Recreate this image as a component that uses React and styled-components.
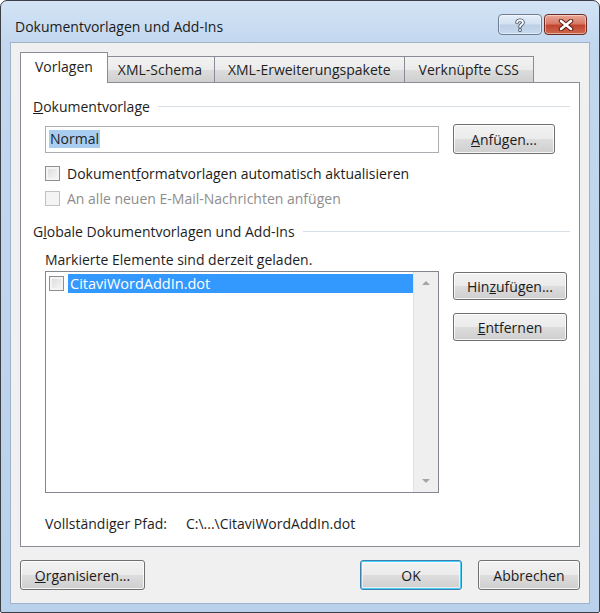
import React from "react";
import styled, { createGlobalStyle, css } from "styled-components";

const GlobalStyle = createGlobalStyle`
  html, body {
    margin: 0;
    padding: 0;
    background: #ffffff;
  }
  body {
    font-family: "Segoe UI", "Open Sans", "Noto Sans", sans-serif;
    font-size: 14px;
    color: #1e1e1e;
  }
`;

const Window = styled.div`
  width: 600px;
  height: 613px;
  box-sizing: border-box;
  border: 1px solid #3b3f45;
  border-radius: 7px 7px 2px 2px;
  background: linear-gradient(180deg, #d3e3f5 0px, #c3d8ef 40px, #b9d1ea 100%);
  padding: 0 9px 8px 9px;
  display: flex;
  flex-direction: column;
  overflow: hidden;
`;

const TitleBar = styled.div`
  height: 41px;
  display: flex;
  align-items: flex-start;
  justify-content: space-between;
`;

const Title = styled.div`
  padding: 16px 0 0 5px;
  font-size: 14px;
  color: #1b1b1b;
`;

const Caption = styled.div`
  display: flex;
  gap: 2px;
  padding-top: 13px;
  margin-right: 3px;
`;

const CaptionButton = styled.div`
  width: ${(p) => p.$w}px;
  height: 21px;
  box-sizing: border-box;
  border: 1px solid ${(p) => (p.$close ? "#6d2a22" : "#6f7e92")};
  border-radius: 4px;
  display: flex;
  align-items: center;
  justify-content: center;
  box-shadow: inset 0 0 0 1px rgba(255, 255, 255, 0.45);
  background: ${(p) =>
    p.$close
      ? "linear-gradient(180deg, #e9a797 0%, #d97a68 45%, #c2452f 55%, #cf6a4f 100%)"
      : "linear-gradient(180deg, #e6eef8 0%, #d3e1f1 45%, #bccfe5 55%, #c9daee 100%)"};
`;

const Client = styled.div`
  flex: 1;
  background: #f0f0f0;
  border: 1px solid #9eb3c9;
  padding: 9px 9px 0 9px;
  display: flex;
  flex-direction: column;
`;

const TabRow = styled.div`
  display: flex;
  align-items: flex-end;
  height: 30px;
  padding-left: 2px;
  position: relative;
  z-index: 1;
`;

const Tab = styled.div`
  height: 26px;
  box-sizing: border-box;
  padding: 0 ${(p) => p.$pad}px 1px;
  border: 1px solid #898c95;
  border-bottom: none;
  margin-left: -1px;
  display: flex;
  align-items: center;
  background: linear-gradient(180deg, #f3f3f3 0%, #ebebeb 50%, #dddddd 51%, #cfcfcf 100%);
  ${(p) =>
    p.$active &&
    css`
      margin: 0 -2px -1px -2px;
      padding: 0 ${p.$pad + 2}px 3px;
      background: #ffffff;
      position: relative;
      z-index: 2;
      height: 31px;
    `}
`;

const Panel = styled.div`
  background: #ffffff;
  border: 1px solid #898c95;
  height: 465px;
  box-sizing: border-box;
  padding: 13px 9px 0 12px;
  display: flex;
  flex-direction: column;
`;

const SectionHead = styled.div`
  display: flex;
  align-items: center;
  height: 20px;
  gap: 8px;
  margin-top: ${(p) => p.$top || 0}px;
  &::after {
    content: "";
    flex: 1;
    height: 1px;
    background: #d5dfe5;
    margin-top: 1px;
  }
`;

const Indent = styled.div`
  padding-left: 12px;
  margin-top: ${(p) => p.$top || 0}px;
`;

const InputRow = styled.div`
  display: flex;
  align-items: center;
  gap: 14px;
  height: 30px;
  margin-bottom: 7px;
`;

const TextBox = styled.div`
  width: 394px;
  height: 27px;
  box-sizing: border-box;
  border: 1px solid #abadb3;
  display: flex;
  align-items: center;
  padding-left: 3px;
`;

const Selected = styled.span`
  background: #a8cdf1;
  padding: 0 1px;
  line-height: 18px;
`;

const Button = styled.div`
  width: ${(p) => p.$w}px;
  height: ${(p) => p.$h || 29}px;
  box-sizing: border-box;
  border: 1px solid ${(p) => (p.$default ? "#3c7fb1" : "#707070")};
  border-radius: 3px;
  display: flex;
  align-items: center;
  justify-content: center;
  background: linear-gradient(180deg, #f2f2f2 0%, #ebebeb 49%, #dddddd 50%, #cfcfcf 100%);
  box-shadow: ${(p) =>
    p.$default
      ? "inset 0 0 0 1px #48d0f8, inset 0 0 0 2px rgba(255,255,255,0.6)"
      : "inset 0 0 0 1px rgba(255,255,255,0.8)"};
  color: #1b1b1b;
`;

const CheckRow = styled.div`
  display: flex;
  align-items: center;
  height: 25px;
  gap: 7px;
  color: ${(p) => (p.$disabled ? "#8d8d8d" : "#1b1b1b")};
`;

const Box = styled.span`
  width: 15px;
  height: 15px;
  box-sizing: border-box;
  border: 1px solid ${(p) => (p.$disabled ? "#c2c2c2" : "#8e8f8f")};
  background: ${(p) =>
    p.$disabled
      ? "#f4f4f4"
      : "linear-gradient(135deg, #d9d9d9 0%, #ececec 60%, #f8f8f8 100%)"};
  box-shadow: inset 0 0 0 2px #f4f4f4;
  flex-shrink: 0;
`;

const Line = styled.div`
  height: 20px;
  display: flex;
  align-items: center;
  margin-top: ${(p) => p.$top || 0}px;
`;

const ListRow = styled.div`
  display: flex;
  align-items: flex-start;
  gap: 14px;
  margin-top: 2px;
`;

const ListBox = styled.div`
  width: 394px;
  height: 222px;
  box-sizing: border-box;
  border: 1px solid #828790;
  display: flex;
  background: #ffffff;
`;

const ListItems = styled.div`
  flex: 1;
  padding: 2px 0 0 3px;
`;

const ListItem = styled.div`
  display: flex;
  align-items: center;
  gap: 4px;
  height: 19px;
`;

const ItemLabel = styled.span`
  flex: 1;
  background: #3399ff;
  color: #ffffff;
  height: 19px;
  display: flex;
  align-items: center;
  padding-left: 2px;
  font-size: 14.5px;
`;

const ScrollBar = styled.div`
  width: 25px;
  background: #efefef;
  border-left: 1px solid #e2e2e2;
  display: flex;
  flex-direction: column;
  justify-content: space-between;
  align-items: center;
  padding: 9px 0 9px;
  box-sizing: border-box;
`;

const Arrow = styled.span`
  width: 0;
  height: 0;
  border-left: 4px solid transparent;
  border-right: 4px solid transparent;
  ${(p) =>
    p.$up
      ? "border-bottom: 4px solid #a5a5a5;"
      : "border-top: 4px solid #a5a5a5;"}
`;

const SideButtons = styled.div`
  display: flex;
  flex-direction: column;
  gap: 13px;
  padding-top: 1px;
`;

const PathLine = styled(Line)`
  gap: 19px;
`;

const Footer = styled.div`
  display: flex;
  align-items: center;
  justify-content: space-between;
  margin-top: 13px;
`;

const FooterRight = styled.div`
  display: flex;
  gap: 16px;
`;

function CloseGlyph() {
  return (
    <svg width="16" height="12" viewBox="0 0 16 12">
      <path d="M3 2 L13 10 M13 2 L3 10" stroke="#5a1d14" strokeWidth="4.5" strokeLinecap="round" />
      <path d="M3 2 L13 10 M13 2 L3 10" stroke="#ffffff" strokeWidth="2.6" strokeLinecap="round" />
    </svg>
  );
}

function HelpGlyph() {
  return (
    <svg width="12" height="14" viewBox="0 0 12 14">
      <path d="M3 4.5 C3 1.5 9 1.5 9 4.5 C9 6.5 6 6.5 6 8.8" fill="none" stroke="#46566b" strokeWidth="3.6" strokeLinecap="round" />
      <path d="M3 4.5 C3 1.5 9 1.5 9 4.5 C9 6.5 6 6.5 6 8.8" fill="none" stroke="#ffffff" strokeWidth="1.8" strokeLinecap="round" />
      <circle cx="6" cy="12" r="1.9" fill="#46566b" />
      <circle cx="6" cy="12" r="1" fill="#ffffff" />
    </svg>
  );
}

const tabs = [
  { label: "Vorlagen", pad: 12, active: true },
  { label: "XML-Schema", pad: 12 },
  { label: "XML-Erweiterungspakete", pad: 13 },
  { label: "Verknüpfte CSS", pad: 14 },
];

export default function App() {
  return (
    <>
      <GlobalStyle />
      <Window>
        <TitleBar>
          <Title>Dokumentvorlagen und Add-Ins</Title>
          <Caption>
            <CaptionButton $w={44}>
              <HelpGlyph />
            </CaptionButton>
            <CaptionButton $w={43} $close>
              <CloseGlyph />
            </CaptionButton>
          </Caption>
        </TitleBar>
        <Client>
          <TabRow>
            {tabs.map((t) => (
              <Tab key={t.label} $active={t.active} $pad={t.pad}>
                {t.label}
              </Tab>
            ))}
          </TabRow>
          <Panel>
            <SectionHead>
              <span>
                <u>D</u>okumentvorlage
              </span>
            </SectionHead>
            <Indent $top={8}>
              <InputRow>
                <TextBox>
                  <Selected>Normal</Selected>
                </TextBox>
                <Button $w={102} $h={30}>
                  <span>
                    <u>A</u>nfügen...
                  </span>
                </Button>
              </InputRow>
              <CheckRow>
                <Box />
                <span>
                  Dokument<u>f</u>ormatvorlagen automatisch aktualisieren
                </span>
              </CheckRow>
              <CheckRow $disabled>
                <Box $disabled />
                <span>An alle neuen E-Mail-Nachrichten anfügen</span>
              </CheckRow>
            </Indent>
            <SectionHead $top={10}>
              <span>
                G<u>l</u>obale Dokumentvorlagen und Add-Ins
              </span>
            </SectionHead>
            <Indent $top={8}>
              <Line>Markierte Elemente sind derzeit geladen.</Line>
              <ListRow>
                <ListBox>
                  <ListItems>
                    <ListItem>
                      <Box />
                      <ItemLabel>CitaviWordAddIn.dot</ItemLabel>
                    </ListItem>
                  </ListItems>
                  <ScrollBar>
                    <Arrow $up />
                    <Arrow />
                  </ScrollBar>
                </ListBox>
                <SideButtons>
                  <Button $w={114} $h={28}>
                    <span>
                      Hin<u>z</u>ufügen...
                    </span>
                  </Button>
                  <Button $w={114} $h={28}>
                    <span>
                      <u>E</u>ntfernen
                    </span>
                  </Button>
                </SideButtons>
              </ListRow>
              <PathLine $top={20}>
                <span>Vollständiger Pfad:</span>
                <span>C:\...\CitaviWordAddIn.dot</span>
              </PathLine>
            </Indent>
          </Panel>
          <Footer>
            <Button $w={125} $h={30}>
              <span>
                <u>O</u>rganisieren...
              </span>
            </Button>
            <FooterRight>
              <Button $w={102} $h={30} $default>
                OK
              </Button>
              <Button $w={102} $h={30}>
                Abbrechen
              </Button>
            </FooterRight>
          </Footer>
        </Client>
      </Window>
    </>
  );
}
